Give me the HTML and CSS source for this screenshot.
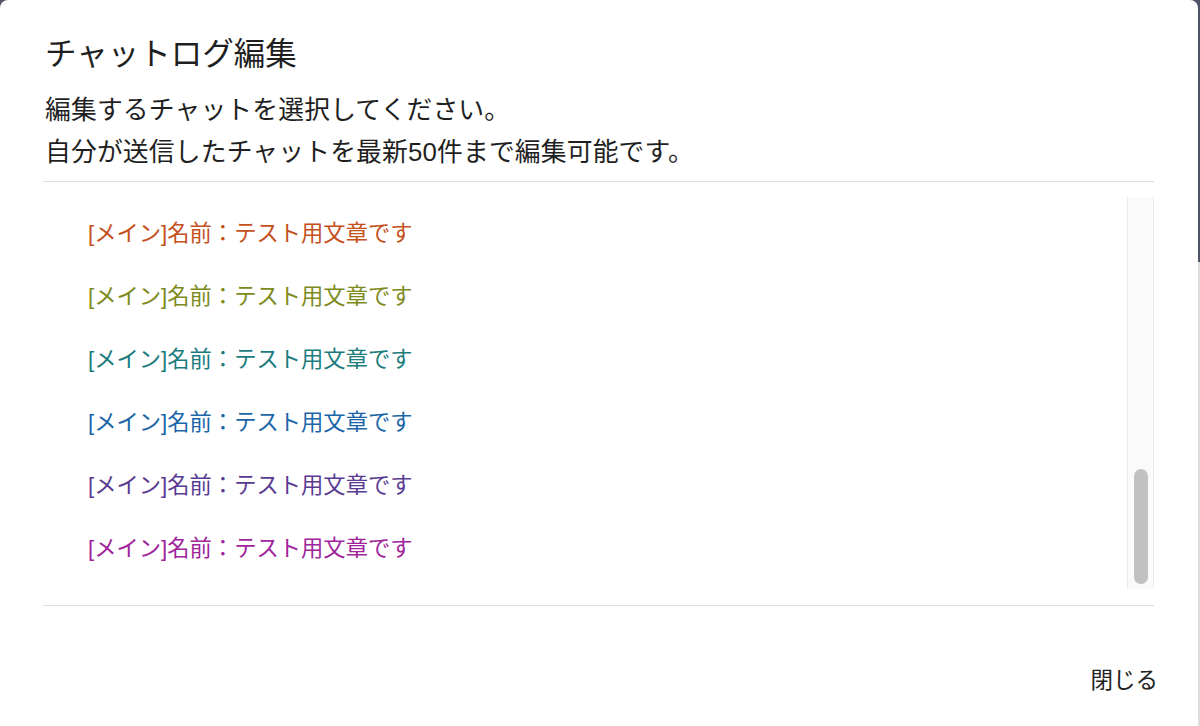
FILE: index.html
```html
<!DOCTYPE html>
<html lang="ja">
<head>
<meta charset="utf-8">
<title>チャットログ編集</title>
<link rel="stylesheet" href="styles.css">
</head>
<body>
<div class="dialog">
  <h1 class="title">チャットログ編集</h1>
  <div class="desc">
    <p class="desc-line">編集するチャットを選択してください。</p>
    <p class="desc-line">自分が送信したチャットを最新50件まで編集可能です。</p>
  </div>
  <hr class="divider">
  <div class="list">
    <div class="rows">
      <div class="row c-orange">[メイン]名前：テスト用文章です</div>
      <div class="row c-olive">[メイン]名前：テスト用文章です</div>
      <div class="row c-teal">[メイン]名前：テスト用文章です</div>
      <div class="row c-blue">[メイン]名前：テスト用文章です</div>
      <div class="row c-purple">[メイン]名前：テスト用文章です</div>
      <div class="row c-magenta">[メイン]名前：テスト用文章です</div>
    </div>
    <div class="scrollbar">
      <div class="thumb"></div>
    </div>
  </div>
  <hr class="divider">
  <div class="footer">
    <button class="btn" type="button">閉じる</button>
  </div>
</div>
</body>
</html>
```
FILE: styles.css
```css
html, body {
  margin: 0;
  padding: 0;
  height: 100%;
}
body {
  background: linear-gradient(to bottom, #4f5368 0, #4f5368 262px, #dcdcdc 262px);
  font-family: "Liberation Sans", "Noto Sans CJK JP", sans-serif;
  color: #222;
  overflow: hidden;
}
.dialog {
  width: 1198px;
  height: 726px;
  background: #fff;
  border-radius: 8px 8px 0 0;
  padding: 31px 44px 0 43px;
  box-sizing: border-box;
  display: flex;
  flex-direction: column;
}
.title {
  margin: 0;
  font-size: 31.5px;
  line-height: 46px;
  font-weight: 400;
  padding-left: 2px;
  color: #1f1f1f;
}
.desc {
  margin: 12px 0 8px;
  padding-left: 2px;
  color: #1f1f1f;
}
.desc-line {
  margin: 0;
  font-size: 25.8px;
  line-height: 42px;
  letter-spacing: 0.15px;
  white-space: nowrap;
}
.divider {
  margin: 0;
  border: none;
  border-top: 1.5px solid #dedede;
  height: 0;
}
.list {
  margin: 15px 0 16px;
  height: 392px;
  display: flex;
}
.rows {
  flex: 1;
  display: flex;
  flex-direction: column;
  justify-content: flex-end;
  padding-bottom: 12px;
}
.row {
  height: 63px;
  display: flex;
  align-items: center;
  padding-left: 45px;
  font-size: 22.3px;
  white-space: nowrap;
}
.c-orange { color: #c4501c; }
.c-olive { color: #7d8a1c; }
.c-teal { color: #1b7c7e; }
.c-blue { color: #1a66a8; }
.c-purple { color: #5a3b92; }
.c-magenta { color: #a0249c; }
.scrollbar {
  width: 25px;
  background: #fafafa;
  border-left: 1px solid #ececec;
  border-right: 1px solid #ececec;
  display: flex;
  flex-direction: column;
  justify-content: flex-end;
  align-items: center;
  padding-bottom: 5px;
  box-sizing: content-box;
}
.thumb {
  width: 14px;
  height: 115px;
  background: #c1c1c1;
  border-radius: 7px;
}
.footer {
  display: flex;
  justify-content: flex-end;
  padding-top: 59px;
  margin-right: -4px;
}
.btn {
  border: none;
  background: transparent;
  padding: 0;
  font-family: "Liberation Sans", "Noto Sans CJK JP", sans-serif;
  font-size: 22.5px;
  line-height: 32px;
  color: #222;
}
```
